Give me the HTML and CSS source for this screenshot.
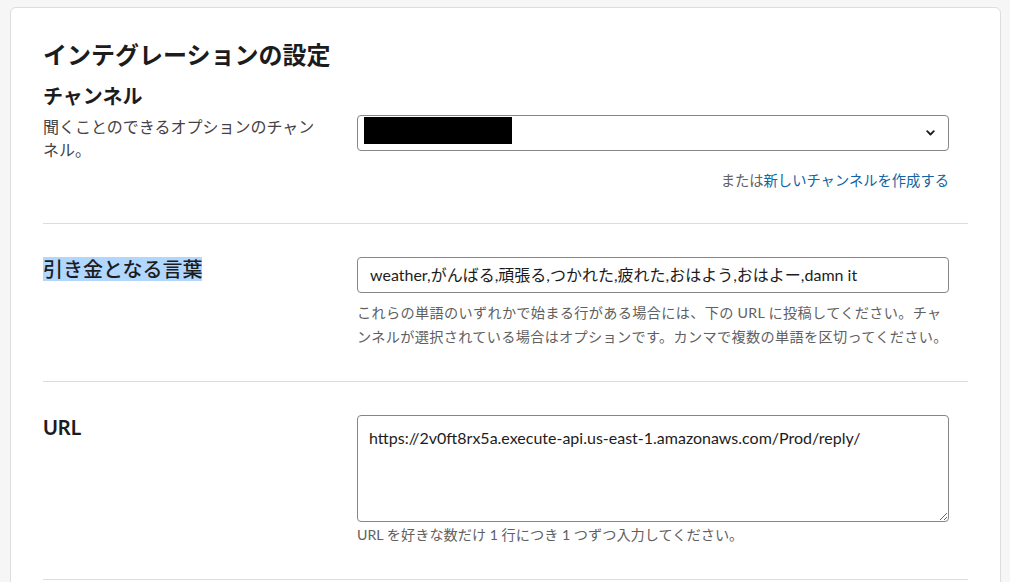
FILE: index.html
```html
<!DOCTYPE html>
<html lang="ja">
<head>
<meta charset="utf-8">
<title>インテグレーションの設定</title>
<link rel="stylesheet" href="styles.css">
</head>
<body>
<div class="page">
  <div class="card">
    <section class="section section-first">
      <h1 class="title">インテグレーションの設定</h1>
      <div class="row">
        <div class="label-col">
          <h2 class="label">チャンネル</h2>
          <p class="desc">聞くことのできるオプションのチャンネル。</p>
        </div>
        <div class="field-col field-col-offset">
          <div class="select">
            <span class="redacted"></span>
            <svg class="chevron" width="9" height="6" viewBox="0 0 9 6"><path d="M1.2 1.2 L4.5 4.5 L7.8 1.2" fill="none" stroke="#1d1c1d" stroke-width="1.8" stroke-linecap="round" stroke-linejoin="round"/></svg>
          </div>
          <p class="alt-link">または<a href="#" class="link">新しいチャンネルを作成する</a></p>
        </div>
      </div>
    </section>

    <section class="section">
      <div class="row">
        <div class="label-col">
          <h2 class="label label-plain"><span class="selected">引き金となる言葉</span></h2>
        </div>
        <div class="field-col">
          <div class="input">weather,がんばる,頑張る,つかれた,疲れた,おはよう,おはよー,damn it</div>
          <p class="help help-gap">これらの単語のいずれかで始まる行がある場合には、下の URL に投稿してください。チャ<br>ンネルが選択されている場合はオプションです。カンマで複数の単語を区切ってください。</p>
        </div>
      </div>
    </section>

    <section class="section">
      <div class="row">
        <div class="label-col">
          <h2 class="label">URL</h2>
        </div>
        <div class="field-col">
          <textarea class="textarea">https://2v0ft8rx5a.execute-api.us-east-1.amazonaws.com/Prod/reply/</textarea>
          <p class="help">URL を好きな数だけ 1 行につき 1 つずつ入力してください。</p>
        </div>
      </div>
    </section>
  </div>
</div>
</body>
</html>
```

FILE: styles.css
```css
* {
  box-sizing: border-box;
}

html, body {
  margin: 0;
  padding: 0;
  background: #f6f6f6;
  font-family: Lato, "Noto Sans CJK JP", sans-serif;
  color: #1d1c1d;
  overflow: hidden;
}

.page {
  padding: 7px 9px 0 10px;
}

.card {
  background: #ffffff;
  border: 1px solid #dddddd;
  border-radius: 6px;
  padding: 32px 32px 0 32px;
  min-height: 700px;
}

.section {
  padding: 33px 0 32px 0;
  border-bottom: 1px solid #dddddd;
}

.section-first {
  padding-top: 0;
}

.title {
  margin: 0 0 14px 0;
  font-size: 24px;
  line-height: 30px;
  font-weight: 700;
}

.row {
  display: grid;
  grid-template-columns: 280px 592px;
  column-gap: 34px;
  padding-right: 20px;
}

.label {
  margin: 0;
  font-size: 20px;
  line-height: 24px;
  font-weight: 700;
}

.label-plain {
  font-weight: 500;
}

.selected {
  background: #b2d7ff;
}

.desc {
  margin: 8px 0 0 0;
  font-size: 16px;
  line-height: 22.5px;
  color: #454245;
}

.field-col-offset {
  padding-top: 31px;
}

.select {
  height: 36px;
  border: 1px solid #868686;
  border-radius: 4px;
  display: flex;
  align-items: flex-start;
  justify-content: space-between;
  padding: 1px 13px 0 6px;
}

.redacted {
  display: block;
  width: 148px;
  height: 27px;
  background: #000000;
}

.chevron {
  align-self: center;
  margin-top: -1px;
}

.alt-link {
  margin: 20px 0 0 0;
  text-align: right;
  font-size: 14.3px;
  line-height: 20px;
  color: #616061;
}

.link {
  color: #1264a3;
  text-decoration: none;
}

.input {
  height: 36px;
  border: 1px solid #868686;
  border-radius: 4px;
  padding: 0 12px;
  font-size: 16px;
  line-height: 34px;
  white-space: nowrap;
}

.textarea {
  display: block;
  width: 100%;
  height: 107px;
  margin: 0;
  border: 1px solid #868686;
  border-radius: 4px;
  padding: 11px 11px;
  font-family: Lato, "Noto Sans CJK JP", sans-serif;
  font-size: 16px;
  line-height: 22px;
  color: #1d1c1d;
  background: #ffffff;
  resize: vertical;
  outline: none;
}

.help {
  margin: 1px 0 0 0;
  font-size: 14.2px;
  line-height: 24px;
  color: #616061;
}

.help-gap {
  margin-top: 8px;
  letter-spacing: 0.3px;
  white-space: nowrap;
}
```
